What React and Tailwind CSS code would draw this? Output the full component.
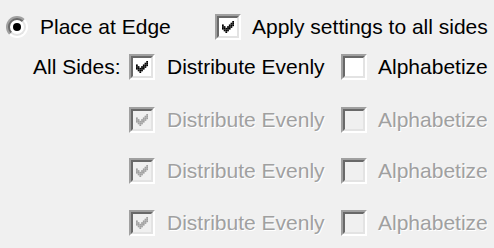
import React from 'react';

const FONT = { fontFamily: '"Liberation Sans", Arial, sans-serif' };

// ── classic 7x7 check glyph ──
const CHECK = [
  [6], [5, 6], [0, 4, 5, 6], [0, 1, 3, 4, 5], [0, 1, 2, 3, 4], [1, 2, 3], [2],
];

function CheckGlyph({ color }) {
  return (
    <svg width="12" height="12" viewBox="0 0 7 7">
      {CHECK.map((cols, y) =>
        cols.map((x) => <rect key={`${x}-${y}`} x={x} y={y} width="1.02" height="1.02" fill={color} />)
      )}
    </svg>
  );
}

function Box({ checked = false, disabled = false }) {
  return (
    <span className="flex h-[26px] w-[26px] shrink-0 border-2 border-t-[#a0a0a0] border-l-[#a0a0a0] border-b-white border-r-white">
      <span
        className={`flex flex-1 items-center justify-center border-2 border-t-[#696969] border-l-[#696969] border-b-[#e3e3e3] border-r-[#e3e3e3]
          ${disabled ? 'bg-[#f0f0f0]' : 'bg-white'}`}
      >
        {checked && <CheckGlyph color={disabled ? '#a0a0a0' : '#000'} />}
      </span>
    </span>
  );
}

function Label({ children, disabled }) {
  return (
    <span
      className={`text-[21px] leading-[26px] whitespace-nowrap ${disabled ? 'text-[#a0a0a0] [text-shadow:1px_1px_0_#fff]' : 'text-black'}`}
    >
      {children}
    </span>
  );
}

function Radio() {
  return (
    <svg width="22" height="22" viewBox="0 0 22 22" className="shrink-0">
      <defs>
        <clipPath id="tl"><polygon points="0,0 22,0 0,22" /></clipPath>
        <clipPath id="br"><polygon points="22,0 22,22 0,22" /></clipPath>
      </defs>
      <circle cx="11" cy="11" r="11" fill="#a0a0a0" clipPath="url(#tl)" />
      <circle cx="11" cy="11" r="11" fill="#ffffff" clipPath="url(#br)" />
      <circle cx="11" cy="11" r="9" fill="#696969" clipPath="url(#tl)" />
      <circle cx="11" cy="11" r="9" fill="#e3e3e3" clipPath="url(#br)" />
      <circle cx="11" cy="11" r="7" fill="#ffffff" />
      <circle cx="11" cy="11" r="4" fill="#000" />
    </svg>
  );
}

function SideRow({ label, disabled, className = '' }) {
  return (
    <div className={`flex h-[26px] items-center ${className}`}>
      <div className="w-[129px] pl-[33px]">{label && <Label>{label}</Label>}</div>
      <div className="flex w-[212px] items-center gap-[12px]">
        <Box checked disabled={disabled} />
        <Label disabled={disabled}>Distribute Evenly</Label>
      </div>
      <div className="flex items-center gap-[11px]">
        <Box disabled={disabled} />
        <Label disabled={disabled}>Alphabetize</Label>
      </div>
    </div>
  );
}

export default function App() {
  return (
    <div className="flex h-[248px] w-[494px] flex-col overflow-hidden bg-[#f0f0f0] pt-[14px]" style={FONT}>
      {/* top row */}
      <div className="flex h-[26px] items-center">
        <div className="flex w-[215px] items-center gap-[12px] pl-[6px]">
          <Radio />
          <Label>Place at Edge</Label>
        </div>
        <div className="flex items-center gap-[11px]">
          <Box checked />
          <Label>Apply settings to all sides</Label>
        </div>
      </div>

      <SideRow label="All Sides:" className="mt-[14px]" />
      <SideRow disabled className="mt-[27px]" />
      <SideRow disabled className="mt-[25px]" />
      <SideRow disabled className="mt-[26px]" />
    </div>
  );
}
